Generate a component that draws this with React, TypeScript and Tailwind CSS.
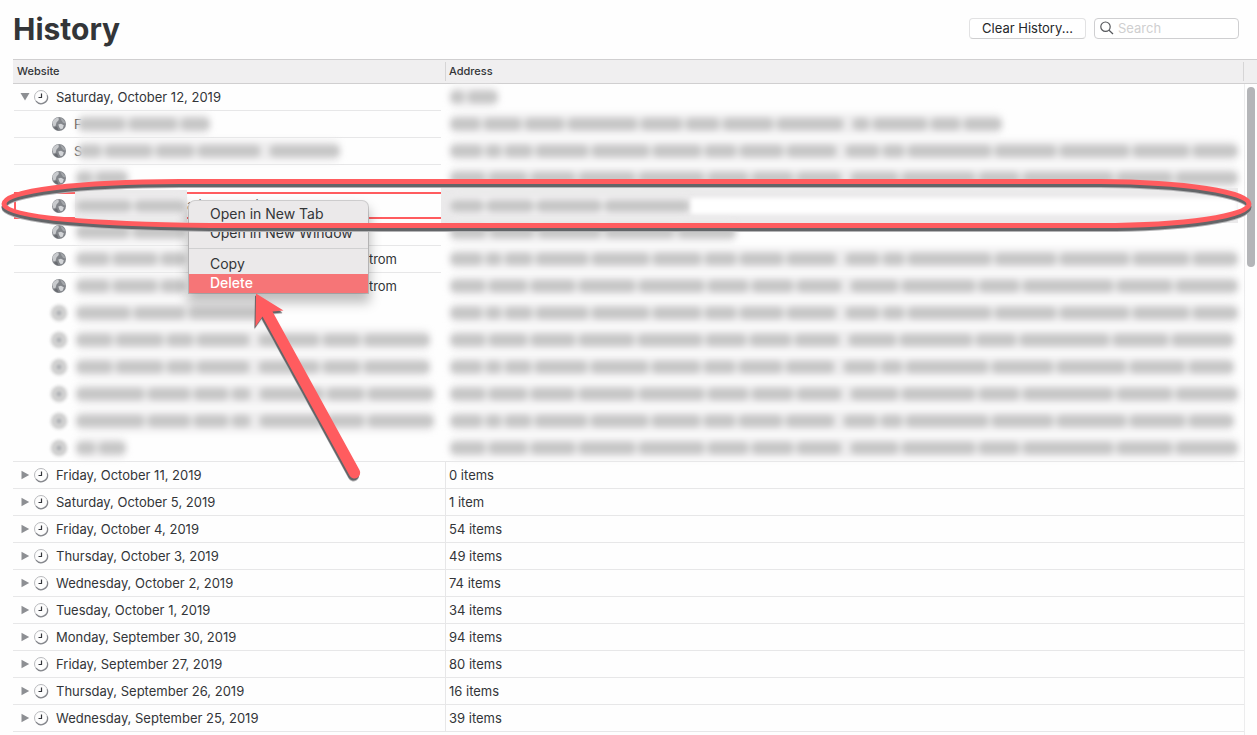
import React from "react";

type Visit = {
  title?: string;
  tail?: string;
  faded?: boolean;
  line?: boolean;
  selected?: boolean;
  left: number;
  leftParts: number[];
  right: number;
  rightParts: number[];
};

const LONG = [34, 18, 30, 56, 62, 52, 34, 47, 53, 0, 36, 24, 88, 66, 74, 60, 48];
const LONG_B = [38, 42, 48, 60, 70, 44, 45, 48, 0, 52, 78, 44, 96, 60, 66];
const TITLE_A = [34, 46, 26, 50, 0, 58, 36, 62];
const TITLE_B = [64, 40, 34, 18, 0, 60, 36, 62];

const visits: Visit[] = [
  { title: "F", line: true, left: 134, leftParts: [44, 46, 28], right: 554, rightParts: [30, 38, 40, 68, 42, 34, 50, 66, 0, 18, 54, 30, 38] },
  { title: "S", line: true, left: 264, leftParts: [22, 44, 36, 58, 0, 64], right: 790, rightParts: LONG },
  { left: 54, leftParts: [16, 30], right: 790, rightParts: LONG_B },
  { selected: true, tail: "ational Navigator", left: 112, leftParts: [54, 50], right: 242, rightParts: [32, 46, 62, 82] },
  { line: true, left: 112, leftParts: [50, 50], right: 288, rightParts: [34, 42, 60, 66, 54] },
  { line: true, tail: "strom", left: 112, leftParts: [26, 36, 20], right: 790, rightParts: LONG },
  { tail: "strom", left: 112, leftParts: [26, 36, 20], right: 790, rightParts: LONG_B },
  { faded: true, left: 196, leftParts: [50, 48, 74], right: 790, rightParts: LONG },
  { faded: true, left: 356, leftParts: TITLE_A, right: 786, rightParts: LONG_B },
  { faded: true, left: 356, leftParts: TITLE_A, right: 786, rightParts: LONG },
  { faded: true, left: 360, leftParts: TITLE_B, right: 790, rightParts: LONG_B },
  { faded: true, left: 360, leftParts: TITLE_B, right: 786, rightParts: LONG },
  { faded: true, left: 52, leftParts: [18, 26], right: 790, rightParts: LONG_B },
];

const days: [string, string][] = [
  ["Friday, October 11, 2019", "0 items"],
  ["Saturday, October 5, 2019", "1 item"],
  ["Friday, October 4, 2019", "54 items"],
  ["Thursday, October 3, 2019", "49 items"],
  ["Wednesday, October 2, 2019", "74 items"],
  ["Tuesday, October 1, 2019", "34 items"],
  ["Monday, September 30, 2019", "94 items"],
  ["Friday, September 27, 2019", "80 items"],
  ["Thursday, September 26, 2019", "16 items"],
  ["Wednesday, September 25, 2019", "39 items"],
];

function Redacted({ width, parts }: { width: number; parts: number[] }) {
  return (
    <span
      aria-hidden="true"
      className="flex h-[22px] max-w-full shrink-0 items-center gap-0.5 rounded-lg bg-[#efeeef] px-px blur-[3px]"
      style={{ width }}
    >
      {parts.map((p, i) => (
        <span key={i} className="h-3 min-w-1 rounded-full bg-[#c6c6c6]" style={{ flexGrow: p, flexBasis: 0, opacity: p ? 1 : 0 }} />
      ))}
    </span>
  );
}

function Clock() {
  return (
    <svg viewBox="0 0 16 16" className="size-4 shrink-0" fill="none" aria-hidden="true">
      <circle cx="8" cy="8" r="6.5" fill="#fdfdfd" stroke="#b9babd" />
      <path d="M14.3 6.3A6.5 6.5 0 0 1 3 12.2" stroke="#85878c" strokeWidth="1.2" />
      <path d="M8.5 4.5V8.5H5.5" stroke="#33353a" strokeWidth="1.2" />
    </svg>
  );
}

function Globe({ faded }: { faded?: boolean }) {
  if (faded) {
    return (
      <svg viewBox="0 0 20 20" className="-mx-[3px] size-5 shrink-0 blur-[1px]" aria-hidden="true">
        <circle cx="10" cy="10" r="9.5" fill="#ececec" />
        <circle cx="10" cy="10" r="7.5" fill="#d0d0d0" />
        <circle cx="10" cy="10" r="2.5" fill="#b2b4b7" />
      </svg>
    );
  }
  return (
    <svg viewBox="0 0 14 14" className="size-3.5 shrink-0" aria-hidden="true">
      <circle cx="7" cy="7" r="7" fill="#83868b" />
      <path d="M0.500 6.500C0.500 3.500 3 0.800 6.500 0.500L6.800 3 4.500 5.500 3.500 9 1.500 9.500Z" fill="#c9cbce" />
      <path d="M8.500 1C11 1.700 13 3.800 13.300 6.500L11 5.800 9.500 3.500Z" fill="#a3a6aa" />
      <path d="M6.300 7.500 9 6.800 11.800 8.300 10.800 11.500 8.800 12.300 7.300 10.500Z" fill="#d3d5d8" />
      <path d="M2 10.500 5 9.500 6.500 13.500C4.500 13.300 3 12.200 2 10.500Z" fill="#686b70" />
    </svg>
  );
}

function Disclosure({ open, label }: { open?: boolean; label: string }) {
  return (
    <button type="button" aria-label={label} aria-expanded={!!open} className="flex w-3 shrink-0 items-center justify-center">
      <svg viewBox="0 0 10 10" className="size-2.5" fill="#8d8f93" aria-hidden="true">
        {open ? <path d="M0.500 1H9.500L5 8.500Z" /> : <path d="M1.500 0.800V9.200L9.200 5Z" />}
      </svg>
    </button>
  );
}

function Menu() {
  const item = "flex h-[19px] w-full items-center pb-0.5 pl-[21px] text-left";
  return (
    <div
      role="menu"
      className="absolute top-[201px] left-[189px] z-10 w-[179px] rounded-t-md bg-[#ebe9ea] pt-1 text-[14px] text-[#333538] shadow-[0_8px_12px_2px_#00000040,0_0_0_1px_#d4d3d4]"
    >
      <button type="button" role="menuitem" className={item}>Open in New Tab</button>
      <button type="button" role="menuitem" className={item}>Open in New Window</button>
      <div role="separator" className="mt-[5px] mb-[6px] h-px bg-[#d0d0d1]" />
      <button type="button" role="menuitem" className={item}>Copy</button>
      <button type="button" role="menuitem" className="flex h-[19px] w-full items-center bg-[#f67577] pb-0.5 pl-[21px] text-left font-medium text-white">
        Delete
      </button>
    </div>
  );
}

function Annotations() {
  const loop = "M180 181.500H1100C1185 182 1249 192 1249 204C1249 216 1185 225.500 1100 225.500H210C95 224 4 218 4 204C4 190 80 182 180 181.500Z";
  const arrow = "M256 293.500 283.500 310.500 272.500 311.500 359.500 470A5.500 5.500 0 0 1 349.500 475.500L262.500 316.500 255.500 326.500Z";
  return (
    <svg viewBox="0 0 1257 735" width="1257" height="735" className="pointer-events-none absolute top-0 left-0 z-20" fill="none" aria-hidden="true">
      <path d={loop} stroke="#b4b4b6" strokeWidth="5" transform="translate(0 4)" />
      <path d={loop} stroke="#636568" strokeWidth="5" transform="translate(0 3)" />
      <path d={loop} stroke="#ff5c5f" strokeWidth="5" />
      <path d={arrow} fill="#b4b4b6" transform="translate(-1 3)" />
      <path d={arrow} fill="#636568" transform="translate(-1 2)" />
      <path d={arrow} fill="#ff5c5f" />
    </svg>
  );
}

function VisitRow({ v, last }: { v: Visit; last: boolean }) {
  const cell = last ? "border-b border-[#e7e7e8] p-0" : "p-0";
  const inner = last ? "flex h-[26px] items-center" : "flex h-[27px] items-center border-b border-transparent";
  return (
    <tr>
      <td className={cell}>
        <div
          className={
            v.selected
              ? "mr-1 ml-px flex h-[27px] items-center border-y-2 border-l-2 border-[#ff5c5f] pl-9"
              : v.line
                ? "mr-1 ml-px flex h-[27px] items-center border-b border-[#e7e7e8] pl-[38px]"
                : inner + " mr-1 ml-px pl-[38px]"
          }
        >
          <Globe faded={v.faded} />
          {v.title && <span className="-mr-2.5 ml-2 w-2.5 shrink-0">{v.title}</span>}
          <span className={v.title ? "z-1 ml-[3px]" : v.selected ? "z-1 -my-1 ml-[9px] flex h-8 items-center bg-[#ebeaeb]" : "z-1 ml-[9px]"}>
            <Redacted width={v.left} parts={v.leftParts} />
          </span>
          {v.tail && <span className={v.selected ? "pb-0.5 whitespace-nowrap" : "ml-auto pr-11"}>{v.tail}</span>}
        </div>
      </td>
      <td className={cell}>
        {v.selected ? (
          <div className="-my-1 -ml-1 mr-1.5 flex h-[35px] items-center bg-[#ebeaeb] pl-2">
            <Redacted width={v.right} parts={v.rightParts} />
            <span className="h-4 flex-1 bg-white blur-[2px]" />
          </div>
        ) : (
          <div className={inner + " px-1"}>
            <Redacted width={v.right} parts={v.rightParts} />
          </div>
        )}
      </td>
    </tr>
  );
}

export default function App() {
  return (
    <main className="relative h-screen overflow-hidden bg-[#fefefe] font-['Inter','Liberation_Sans',sans-serif] text-[13px] leading-4 text-[#333538]">
      <header className="flex h-[59px] items-center justify-between pr-[18px] pl-[13px]">
        <h1 className="pb-0.5 text-[30px] leading-9 font-bold">History</h1>
        <div className="flex items-center gap-2 pb-[3px]">
          <button type="button" className="h-[21px] w-[117px] rounded border border-[#e2e2e3] border-b-[#cfcfd0] bg-white text-[#25272a]">
            Clear History...
          </button>
          <label className="flex h-[21px] w-[145px] items-center gap-1 rounded border border-[#cfcfd1] bg-white pl-[5px]">
            <svg viewBox="0 0 14 14" className="size-3.5 shrink-0" fill="none" stroke="#55575b" strokeWidth="1.200" aria-hidden="true">
              <circle cx="5.500" cy="5.700" r="4.700" />
              <path d="M9 9.200 13 13" />
            </svg>
            <input type="search" aria-label="Search" placeholder="Search" className="w-full min-w-0 bg-transparent outline-none placeholder:text-[#cfcfd0]" />
          </label>
        </div>
      </header>

      <div className="flex items-start pl-[13px]">
        <table className="min-w-0 flex-1 table-fixed border-separate border-spacing-0">
          <colgroup>
            <col className="w-[432px]" />
            <col />
          </colgroup>
          <thead className="text-[11px]">
            <tr>
              <th className="h-[25px] border-y border-[#d0cfd0] bg-[#f0eff0] p-0 pb-px pl-1 text-left font-medium">Website</th>
              <th className="h-[25px] border-y border-[#d0cfd0] bg-[#f0eff0] p-0 text-left font-medium">
                <div className="flex h-[19px] items-center border-x border-[#d6d5d6] pb-px pl-[3px]">Address</div>
              </th>
            </tr>
          </thead>
          <tbody>
            <tr>
              <td className="p-0">
                <div className="mr-1 ml-px flex h-[27px] items-center border-b border-[#e7e7e8] pl-[5px]">
                  <Disclosure open label="Saturday, October 12, 2019" />
                  <span className="ml-[2px]"><Clock /></span>
                  <span className="ml-[7px]">Saturday, October 12, 2019</span>
                </div>
              </td>
              <td className="p-0">
                <div className="flex h-[27px] items-center border-b border-transparent pl-1">
                  <Redacted width={50} parts={[14, 30]} />
                </div>
              </td>
            </tr>
            {visits.map((v, i) => <VisitRow key={i} v={v} last={i === visits.length - 1} />)}
            {days.map(([day, count]) => (
              <tr key={day}>
                <td className="h-[27px] border-b border-[#e7e7e8] p-0">
                  <div className="ml-px flex items-center pl-[5px]">
                    <Disclosure label={day} />
                    <span className="ml-[2px]"><Clock /></span>
                    <span className="ml-[7px]">{day}</span>
                  </div>
                </td>
                <td className="border-b border-l border-[#e7e7e8] p-0 pl-[3px]">{count}</td>
              </tr>
            ))}
          </tbody>
        </table>
        <div className="flex w-[13px] shrink-0 flex-col">
          <div className="h-[25px] border-y border-[#d0cfd0] bg-[#f0eff0]" />
          <div className="flex h-screen justify-center border-l border-[#ececed] pt-[3px]">
            <div className="h-[180px] w-2 rounded-full bg-[#b4b5b8]" />
          </div>
        </div>
      </div>

      <Menu />
      <Annotations />
    </main>
  );
}
